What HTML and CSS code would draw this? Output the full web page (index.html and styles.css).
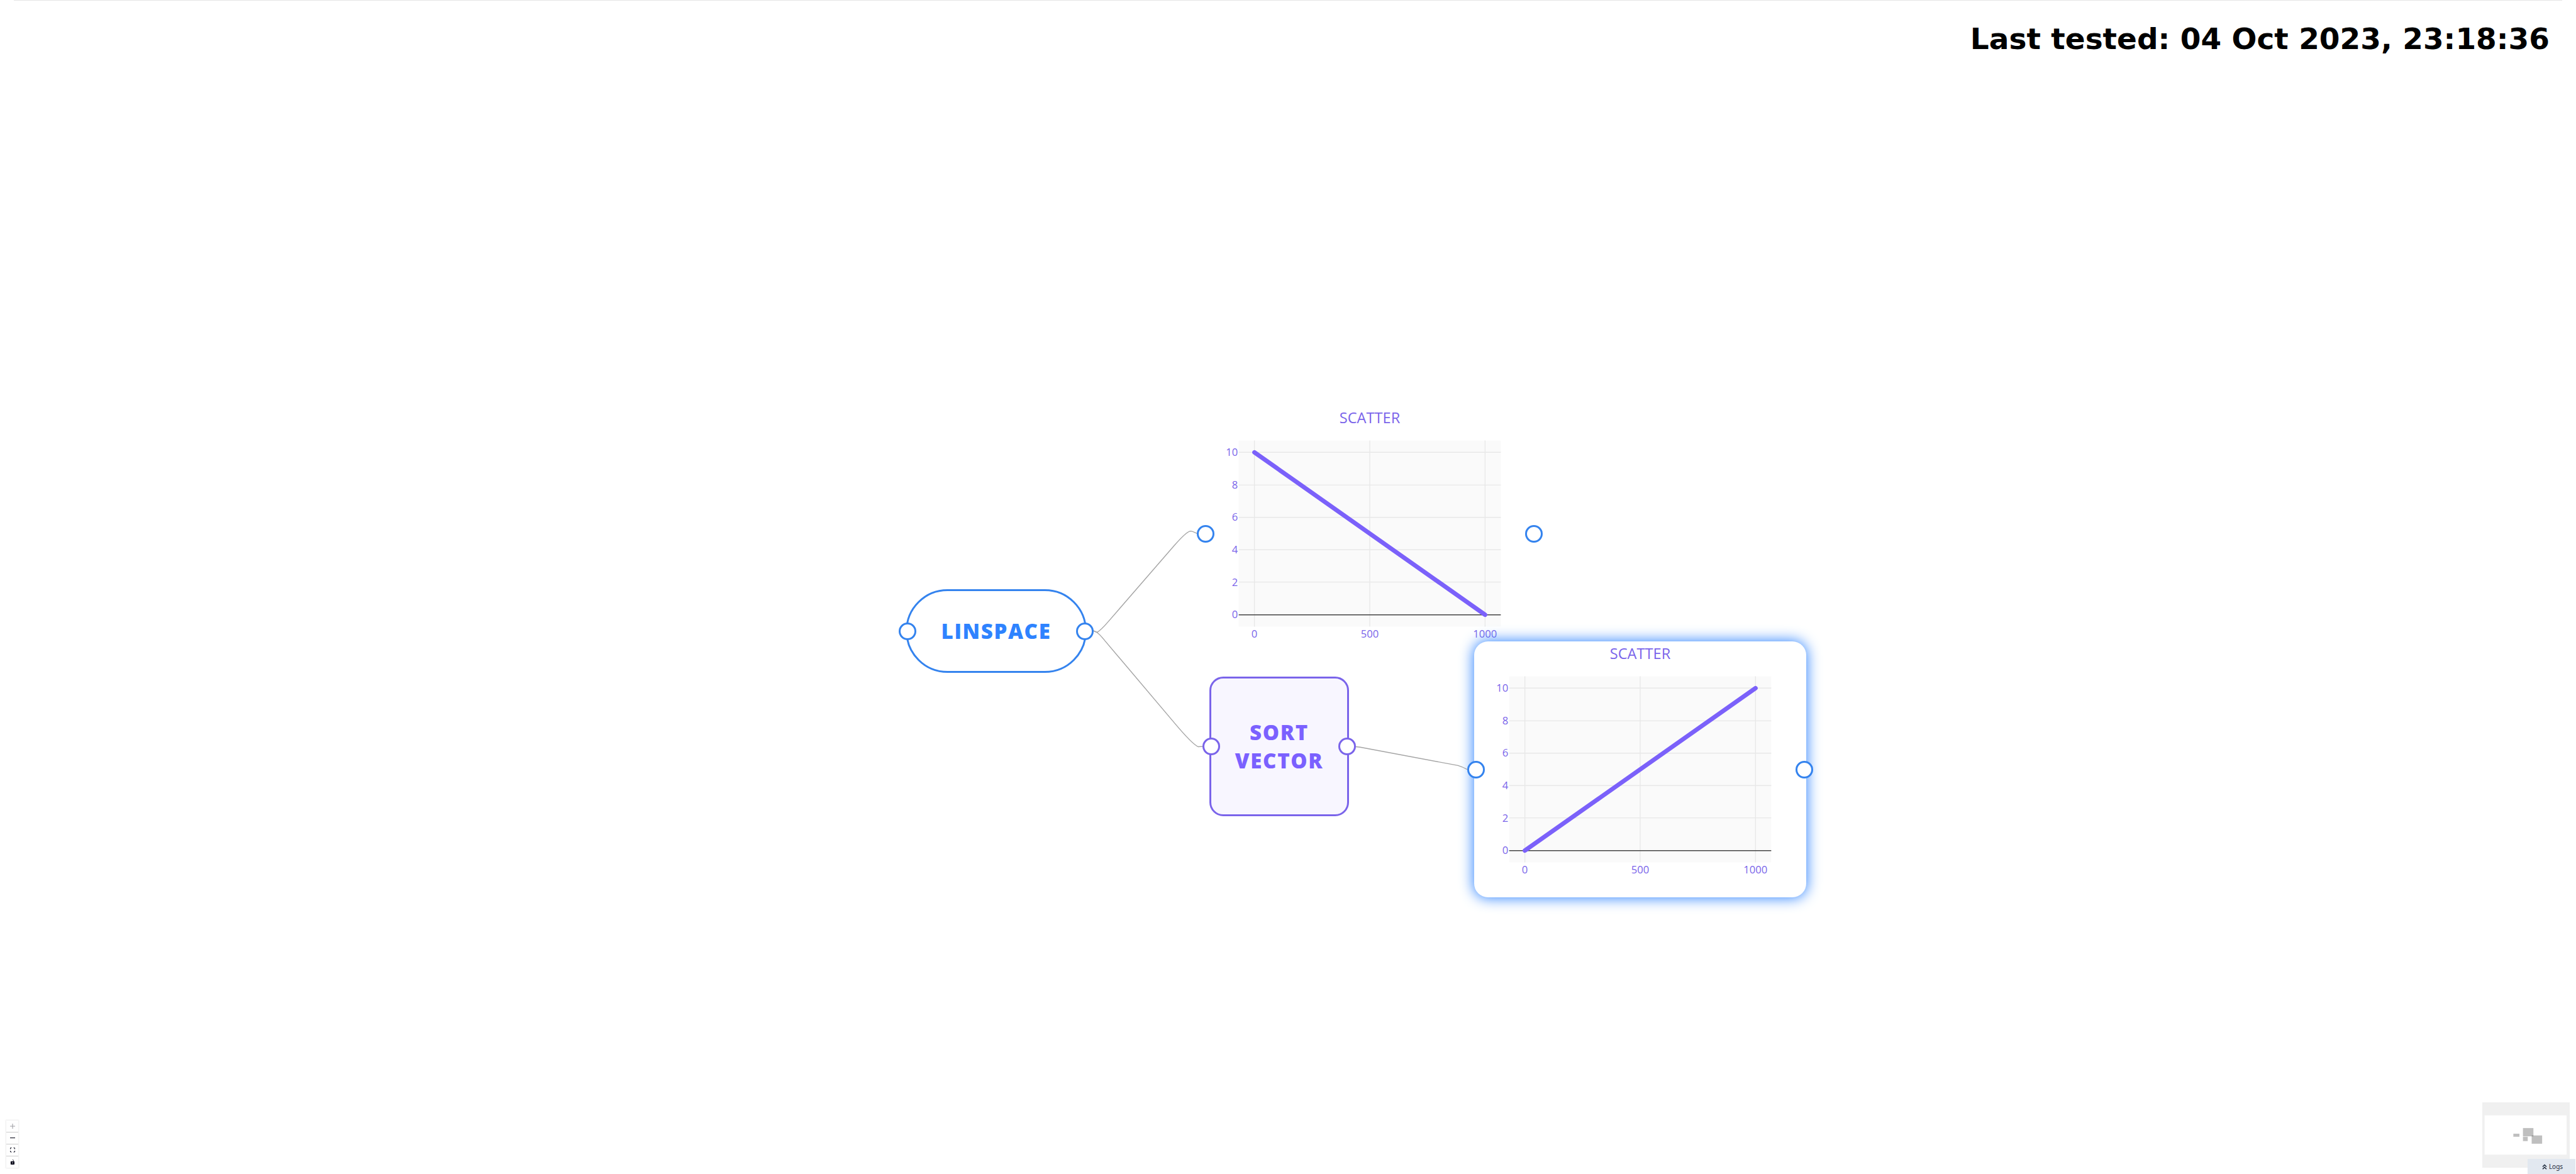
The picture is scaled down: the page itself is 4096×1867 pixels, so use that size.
FILE: index.html
```html
<!DOCTYPE html>
<html lang="en">
<head>
<meta charset="utf-8">
<title>Flow</title>
<link rel="stylesheet" href="styles.css">
</head>
<body>
<div class="app">
  <main class="flow">
    <div class="viewport">
      <svg class="edges" viewBox="1726 696 2449 1298" aria-hidden="true">
        <path d="M2500 1443L2513 1449Q2522 1444 2540 1423L2690 1250Q2718 1218 2727 1217Q2732 1217 2745 1224"/>
        <path d="M2500 1443L2513 1449Q2520 1454 2531 1468L2690 1656Q2732 1706 2745 1711L2760 1710"/>
      </svg>

      <section class="node source">
        <span class="handle left"></span>
        <h2 class="label">LINSPACE</h2>
        <span class="handle right"></span>
      </section>

      <section class="node transform">
        <span class="handle left"></span>
        <h2 class="label">SORT VECTOR</h2>
        <span class="handle right"></span>
      </section>

      <section class="node plot plot-input">
        <svg class="chart" viewBox="0 0 760 586" role="img" aria-label="Scatter, descending">
          <text class="chart-title" x="380" y="40">SCATTER</text>
          <rect class="area" x="80" y="80" width="600" height="426"/>
          <path class="grid" d="M116 80V506M380 80V506M644 80V506M80 107H680M80 182H680M80 256H680M80 330H680M80 404H680"/>
          <path class="zero" d="M80 479H680"/>
          <path class="trace" d="M116 107L644 479"/>
          <g class="ticks-y">
            <text x="78" y="115">10</text><text x="78" y="190">8</text><text x="78" y="264">6</text>
            <text x="78" y="338">4</text><text x="78" y="413">2</text><text x="78" y="487">0</text>
          </g>
          <g class="ticks-x">
            <text x="116" y="532">0</text><text x="380" y="532">500</text><text x="644" y="532">1000</text>
          </g>
        </svg>
        <span class="handle left"></span>
        <span class="handle right"></span>
      </section>

      <section class="node plot plot-sorted selected">
        <svg class="chart" viewBox="0 0 760 586" role="img" aria-label="Scatter, ascending">
          <text class="chart-title" x="380" y="40">SCATTER</text>
          <rect class="area" x="80" y="80" width="600" height="426"/>
          <path class="grid" d="M116 80V506M380 80V506M644 80V506M80 107H680M80 182H680M80 256H680M80 330H680M80 404H680"/>
          <path class="zero" d="M80 479H680"/>
          <path class="trace" d="M116 479L644 107"/>
          <g class="ticks-y">
            <text x="78" y="115">10</text><text x="78" y="190">8</text><text x="78" y="264">6</text>
            <text x="78" y="338">4</text><text x="78" y="413">2</text><text x="78" y="487">0</text>
          </g>
          <g class="ticks-x">
            <text x="116" y="532">0</text><text x="380" y="532">500</text><text x="644" y="532">1000</text>
          </g>
        </svg>
        <span class="handle left"></span>
        <span class="handle right"></span>
      </section>

      <svg class="edges" viewBox="1726 696 2449 1298" aria-hidden="true">
        <path d="M3106 1711L3116 1712L3340 1754Q3350 1757 3361 1763"/>
      </svg>
    </div>
  </main>

  <header class="status">
    <h1 class="tested">Last tested: 04 Oct 2023, 23:18:36</h1>
  </header>

  <div class="controls">
    <button class="control" type="button" aria-label="Zoom in" disabled>
      <svg viewBox="0 0 32 32"><path d="M32 18.133H18.133V32h-4.266V18.133H0v-4.266h13.867V0h4.266v13.867H32z"/></svg>
    </button>
    <button class="control" type="button" aria-label="Zoom out">
      <svg viewBox="0 0 32 5"><path d="M0 0h32v4.2H0z"/></svg>
    </button>
    <button class="control" type="button" aria-label="Fit view">
      <svg viewBox="0 0 32 30"><path d="M3.692 4.63c0-.53.4-.938.939-.938h5.215V0H4.708C2.13 0 0 2.054 0 4.63v5.216h3.692V4.631zM27.354 0h-5.2v3.692h5.17c.53 0 .984.4.984.939v5.215H32V4.631A4.624 4.624 0 0027.354 0zm.954 24.83c0 .532-.4.94-.939.94h-5.215v3.768h5.215c2.577 0 4.631-2.13 4.631-4.707v-5.139h-3.692v5.139zm-23.677.94c-.531 0-.939-.4-.939-.94v-5.138H0v5.139c0 2.577 2.13 4.707 4.708 4.707h5.138V25.77H4.631z"/></svg>
    </button>
    <button class="control" type="button" aria-label="Toggle interactivity">
      <svg viewBox="0 0 25 32"><path d="M21.333 10.667H19.81V7.619C19.81 3.429 16.38 0 12.19 0c-4.114 1.828-1.37 2.133.305 2.438 1.676.305 4.42 2.59 4.42 5.181v3.048H3.047A3.056 3.056 0 000 13.714v15.238A3.056 3.056 0 003.048 32h18.285a3.056 3.056 0 003.048-3.048V13.714a3.056 3.056 0 00-3.048-3.047zM12.19 24.533a3.056 3.056 0 01-3.047-3.047 3.056 3.056 0 013.047-3.048 3.056 3.056 0 013.048 3.048 3.056 3.056 0 01-3.048 3.047z"/></svg>
    </button>
  </div>

  <svg class="minimap" viewBox="0 0 200 150" role="img" aria-label="Mini map">
    <rect class="minimap-view" x="5" y="30" width="188" height="90"/>
    <g class="minimap-nodes">
      <rect x="71" y="72" width="14" height="7"/>
      <rect x="93" y="59" width="24" height="19"/>
      <rect x="93" y="79" width="11" height="10"/>
      <rect x="113" y="76" width="24" height="19"/>
    </g>
  </svg>

  <button class="logs" type="button">
    <svg viewBox="0 0 10 12" aria-hidden="true"><path d="M1 6L5 2L9 6M1 11L5 7L9 11"/></svg>
    Logs
  </button>
</div>
</body>
</html>
```
FILE: styles.css
```css
body {
  margin: 0;
  background: #fff;
  font-family: "Open Sans", "Noto Sans", sans-serif;
}

.app {
  display: grid;
  height: 100vh;
  overflow: hidden;
}

.app > * {
  grid-area: 1 / 1;
}

/* canvas */
.flow {
  display: grid;
  place-content: center;
}

.viewport {
  position: relative;
  width: 1700px;
  height: 901px;
}

.edges {
  position: absolute;
  inset: 0;
  width: 100%;
  height: 100%;
  fill: none;
  stroke: #a4a4a4;
  stroke-width: 2;
}

.node {
  position: absolute;
  box-sizing: border-box;
  display: flex;
  align-items: center;
  justify-content: center;
  border-radius: 22px;
  text-align: center;
}

.source {
  left: 242px;
  top: 454px;
  width: 288px;
  height: 133px;
  border: 3px solid #3483ee;
  border-radius: 67px;
  color: #2e83ff;
}

.transform {
  left: 725px;
  top: 593px;
  width: 222px;
  height: 222px;
  border: 3px solid #7a64ea;
  background: #f8f6ff;
  color: #7b61ff;
}

.plot {
  width: 528px;
  height: 407px;
}

.plot-input {
  left: 716px;
  top: 162px;
}

.plot-sorted {
  left: 1146px;
  top: 537px;
}

.selected {
  background: #fff;
  box-shadow: 0 0 22px 1px #2e83ff;
}

.label {
  margin: 0;
  width: min-content;
  font-size: 33px;
  line-height: 45px;
  font-weight: 800;
  letter-spacing: 0.05em;
}

.handle {
  position: absolute;
  top: 50%;
  box-sizing: border-box;
  width: 28px;
  height: 28px;
  margin-top: -14px;
  border: 3px solid #3483ee;
  border-radius: 50%;
  background: #fff;
}

.transform .handle {
  border-color: #7a64ea;
}

.left {
  left: -11px;
}

.right {
  right: -11px;
}

.source .left,
.transform .left {
  left: -14px;
}

.source .right,
.transform .right {
  right: -14px;
}

/* charts */
.chart {
  width: 100%;
  height: 100%;
  fill: #7a64ea;
  font-size: 24px;
}

.chart-title {
  font-size: 34px;
  text-anchor: middle;
}

.area {
  fill: #fafafa;
}

.grid {
  stroke: #e8e8e8;
  stroke-width: 2;
}

.zero {
  stroke: #444;
  stroke-width: 2;
}

.trace {
  stroke: #7b61fa;
  stroke-width: 10;
  stroke-linecap: round;
}

.ticks-y {
  text-anchor: end;
}

.ticks-x {
  text-anchor: middle;
}

/* status line */
.status {
  align-self: start;
  margin: 0 22px;
  padding: 33px 20px 0;
  border-top: 1px solid #e5e5e5;
  text-align: right;
}

.tested {
  margin: 0;
  font: bold 47px/56px "DejaVu Sans", sans-serif;
  color: #000;
}

/* zoom controls */
.controls {
  align-self: end;
  justify-self: start;
  display: flex;
  flex-direction: column;
  margin: 10px;
  box-shadow: 0 0 2px 1px rgba(0, 0, 0, 0.08);
}

.control {
  display: flex;
  align-items: center;
  justify-content: center;
  box-sizing: border-box;
  width: 19px;
  height: 19px;
  padding: 0;
  border: 0;
  border-bottom: 1px solid #ccc;
  background: #fefefe;
}

.control:last-child {
  height: 18px;
  border-bottom: 0;
}

.control svg {
  width: 8px;
  max-height: 8px;
  fill: #0a0a1a;
}

.control:disabled svg {
  fill-opacity: 0.4;
}

/* mini map and logs */
.minimap {
  place-self: end;
  width: 139px;
  height: 104px;
  margin: 10px;
  background: #f0f0f0;
}

.minimap-view {
  fill: #fff;
}

.minimap-nodes rect {
  fill: rgba(0, 0, 0, 0.25);
}

.logs {
  place-self: end;
  display: flex;
  align-items: center;
  justify-content: center;
  gap: 3px;
  width: 76px;
  height: 24px;
  margin-right: 1px;
  padding: 0 0 0 3px;
  border: 0;
  background: #e2e8f0;
  color: #1e293b;
  font: 10px/16px "Noto Sans", sans-serif;
}

.logs svg {
  width: 8px;
  height: 9px;
  fill: none;
  stroke: currentColor;
  stroke-width: 2;
}
```
